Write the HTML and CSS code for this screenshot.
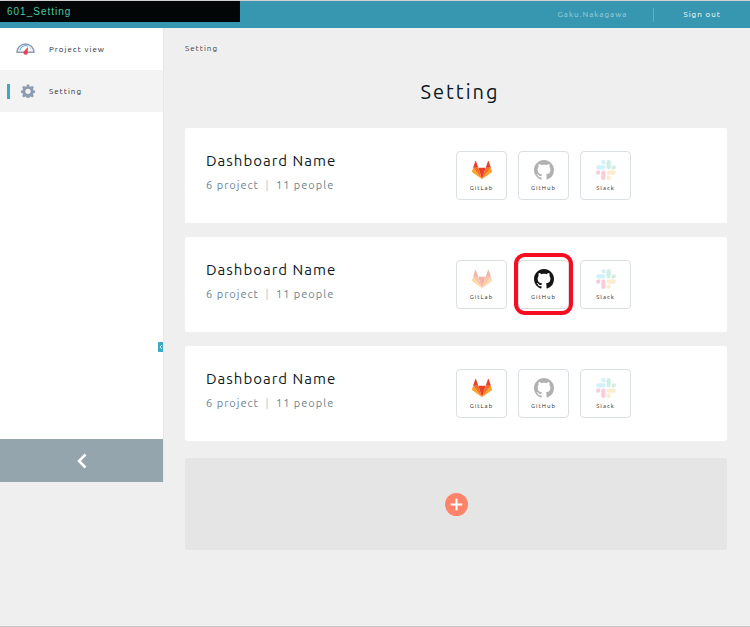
FILE: index.html
```html
<!DOCTYPE html>
<html lang="en">
<head>
<meta charset="utf-8">
<meta name="viewport" content="width=device-width, initial-scale=1">
<title>Setting</title>
<link rel="stylesheet" href="styles.css">
</head>
<body>
<svg class="sprite" aria-hidden="true">
  <symbol id="gitlab" viewBox="0 0 40 37">
    <path fill="#e24329" d="M20 37 27.4 14H12.6z"/>
    <path fill="#fc6d26" d="M20 37 12.6 14H2.2zM20 37 27.4 14h10.4z"/>
    <path fill="#fca326" d="M2.2 14 0 21c-.2.8 0 1.500.7 2L20 37zM37.800 14 40 21c.2.8 0 1.500-.7 2L20 37z"/>
    <path fill="#e24329" d="M2.200 14h10.400L8.100 1c-.3-.9-1.300-.9-1.600 0zM37.800 14H27.400L31.900 1c.3-.9 1.300-.9 1.600 0z"/>
  </symbol>
  <symbol id="github" viewBox="0 0 16 16">
    <path fill="currentColor" d="M8 0C3.580 0 0 3.580 0 8c0 3.540 2.290 6.530 5.470 7.590.4.070.55-.17.55-.38 0-.19-.01-.82-.01-1.490-2.010.37-2.530-.49-2.690-.94-.09-.23-.48-.94-.82-1.130-.28-.15-.68-.52-.01-.53.63-.01 1.080.58 1.230.82.72 1.210 1.870.87 2.330.66.070-.52.28-.87.51-1.070-1.780-.2-3.640-.89-3.640-3.950 0-.87.31-1.590.82-2.150-.08-.2-.36-1.020.08-2.120 0 0 .67-.21 2.200.82.64-.18 1.320-.27 2-.27s1.360.09 2 .27c1.530-1.040 2.200-.82 2.200-.82.44 1.100.16 1.920.08 2.120.51.56.82 1.270.82 2.150 0 3.070-1.870 3.750-3.650 3.950.29.25.54.73.54 1.480 0 1.070-.01 1.930-.01 2.200 0 .21.15.46.55.38A8.010 8.010 0 0 0 16 8c0-4.420-3.580-8-8-8z"/>
  </symbol>
  <symbol id="slack" viewBox="0 0 24 24">
    <path fill="#e01e5a" d="M5.042 15.165a2.528 2.528 0 0 1-2.520 2.523A2.528 2.528 0 0 1 0 15.165a2.527 2.527 0 0 1 2.522-2.520h2.520zM6.313 15.165a2.527 2.527 0 0 1 2.521-2.520 2.527 2.527 0 0 1 2.521 2.520v6.313A2.528 2.528 0 0 1 8.834 24a2.528 2.528 0 0 1-2.521-2.522z"/>
    <path fill="#36c5f0" d="M8.834 5.042a2.528 2.528 0 0 1-2.521-2.520A2.528 2.528 0 0 1 8.834 0a2.528 2.528 0 0 1 2.521 2.522v2.520zM8.834 6.313a2.528 2.528 0 0 1 2.521 2.521 2.528 2.528 0 0 1-2.521 2.521H2.522A2.528 2.528 0 0 1 0 8.834a2.528 2.528 0 0 1 2.522-2.521z"/>
    <path fill="#2eb67d" d="M18.956 8.834a2.528 2.528 0 0 1 2.522-2.521A2.528 2.528 0 0 1 24 8.834a2.528 2.528 0 0 1-2.522 2.521h-2.522zM17.688 8.834a2.528 2.528 0 0 1-2.523 2.521 2.527 2.527 0 0 1-2.520-2.521V2.522A2.527 2.527 0 0 1 15.165 0a2.528 2.528 0 0 1 2.523 2.522z"/>
    <path fill="#ecb22e" d="M15.165 18.956a2.528 2.528 0 0 1 2.523 2.522A2.528 2.528 0 0 1 15.165 24a2.527 2.527 0 0 1-2.520-2.522v-2.522zM15.165 17.688a2.527 2.527 0 0 1-2.520-2.523 2.526 2.526 0 0 1 2.520-2.520h6.313A2.527 2.527 0 0 1 24 15.165a2.528 2.528 0 0 1-2.522 2.523z"/>
  </symbol>
</svg>

<header class="topbar">
  <div class="brand">601_Setting</div>
  <div class="account">
    <span class="user">Gaku.Nakagawa</span>
    <a class="signout" href="#">Sign out</a>
  </div>
</header>

<div class="layout">
  <aside class="sidebar">
    <nav>
      <a class="nav-item" href="#">
        <svg class="nav-icon" viewBox="0 0 20 14" fill="none" aria-hidden="true">
          <path d="M1 10.500a9 8.800 0 0 1 18 0z" fill="#fff" stroke="#8a9ab0" stroke-width="1.500" stroke-linejoin="round"/>
          <path d="M4 8.500a6.300 6.300 0 0 1 9-4.500" stroke="#6aaef0" stroke-width="1.200"/>
          <path d="M14.500 5 16 7.800" stroke="#b8cbe2"/>
          <path d="M12.600 4.800 12.400 11a2.300 2.300 0 1 1-4.200-1.500z" fill="#e9415c"/>
        </svg>
        Project view
      </a>
      <a class="nav-item active" href="#">
        <svg class="nav-icon gear" viewBox="0 0 24 24" aria-hidden="true">
          <path fill="#8c9db2" fill-rule="evenodd" d="M10 1h4l.7 3.100 1.900.8 2.700-1.700 2.800 2.800-1.700 2.700.8 1.900 3.100.7v3.900l-3.100.7-.8 1.900 1.700 2.700-2.800 2.800-2.700-1.700-1.900.8-.7 3.100h-4l-.7-3.100-1.900-.8-2.700 1.700-2.800-2.800 1.700-2.700-.8-1.900-3.100-.7v-3.900l3.100-.7.8-1.900L1.900 6l2.800-2.800 2.700 1.700 1.900-.8zM12 8a4.500 4.500 0 1 0 0 9 4.500 4.500 0 0 0 0-9z"/>
        </svg>
        Setting
      </a>
    </nav>
    <button class="handle" type="button" aria-label="Resize sidebar">
      <svg viewBox="0 0 5 10" fill="none" aria-hidden="true"><path d="M4 3 2 5l2 2" stroke="#d3f1fa"/></svg>
    </button>
    <button class="collapse" type="button" aria-label="Collapse sidebar">
      <svg viewBox="0 0 10 16" fill="none" aria-hidden="true"><path d="M8.500 1.500 2 8l6.500 6.500" stroke="#fff" stroke-width="2.500"/></svg>
    </button>
  </aside>

  <main class="content">
    <div class="crumb">Setting</div>
    <h1>Setting</h1>
    <div class="cards">
      <section class="card">
        <div class="info">
          <h2>Dashboard Name</h2>
          <p>6 project <span class="bar">|</span> 11 people</p>
        </div>
        <div class="services">
          <button class="service" type="button"><svg class="logo"><use href="#gitlab"/></svg>GitLab</button>
          <button class="service" type="button"><svg class="logo dim"><use href="#github"/></svg>GitHub</button>
          <button class="service" type="button"><svg class="logo faint"><use href="#slack"/></svg>Slack</button>
        </div>
      </section>
      <section class="card">
        <div class="info">
          <h2>Dashboard Name</h2>
          <p>6 project <span class="bar">|</span> 11 people</p>
        </div>
        <div class="services">
          <button class="service" type="button"><svg class="logo pale"><use href="#gitlab"/></svg>GitLab</button>
          <button class="service selected" type="button"><svg class="logo"><use href="#github"/></svg>GitHub</button>
          <button class="service" type="button"><svg class="logo faint"><use href="#slack"/></svg>Slack</button>
        </div>
      </section>
      <section class="card">
        <div class="info">
          <h2>Dashboard Name</h2>
          <p>6 project <span class="bar">|</span> 11 people</p>
        </div>
        <div class="services">
          <button class="service" type="button"><svg class="logo"><use href="#gitlab"/></svg>GitLab</button>
          <button class="service" type="button"><svg class="logo dim"><use href="#github"/></svg>GitHub</button>
          <button class="service" type="button"><svg class="logo faint"><use href="#slack"/></svg>Slack</button>
        </div>
      </section>
    </div>
    <button class="add" type="button" aria-label="Add dashboard">
      <svg viewBox="0 0 24 24" aria-hidden="true"><circle cx="12" cy="12" r="12" fill="#ff836a"/><path d="M12 6v12M6 12h12" stroke="#fff" stroke-width="2.200"/></svg>
    </button>
  </main>
</div>
</body>
</html>
```
FILE: styles.css
```css
* {
  box-sizing: border-box;
}

body {
  margin: 0;
  min-height: 100vh;
  display: flex;
  flex-direction: column;
  background: #efefef;
  border-top: 1px solid #d0d0d0;
  border-bottom: 1px solid #c8c8c8;
  color: #0c181f;
  font-family: Ubuntu, "Noto Sans", sans-serif;
  font-size: 8px;
  letter-spacing: 1px;
}

a {
  color: inherit;
  text-decoration: none;
}

button {
  border: 0;
  padding: 0;
  font: inherit;
  letter-spacing: inherit;
  color: inherit;
  cursor: pointer;
}

.sprite {
  position: absolute;
  width: 0;
  height: 0;
}

.topbar {
  display: flex;
  justify-content: space-between;
  align-items: flex-start;
  height: 27px;
  background: #3797b1;
}

.brand {
  width: 32%;
  height: 21px;
  padding-left: 7px;
  background: #020607;
  color: #4cc7a4;
  font-family: "Liberation Sans", Arial, sans-serif;
  font-size: 10px;
  line-height: 21px;
}

.account {
  display: flex;
  align-items: center;
  height: 27px;
  padding-right: 29px;
}

.user {
  padding-right: 26px;
  color: #9dd0dd;
}

.signout {
  padding-left: 29px;
  border-left: 1px solid #62afc3;
  color: #fff;
  line-height: 14px;
}

.layout {
  display: flex;
  align-items: flex-start;
  flex: 1;
}

.sidebar {
  position: relative;
  display: flex;
  flex-direction: column;
  flex: none;
  width: 164px;
  min-height: 454px;
  background: #fff;
  border-right: 1px solid #e8e8e8;
}

.nav-item {
  display: grid;
  grid-template-columns: 19px 1fr;
  column-gap: 14px;
  align-items: center;
  height: 42px;
  padding-left: 16px;
  color: #1f2b33;
}

.nav-item.active {
  position: relative;
  background: #f3f3f3;
}

.nav-item.active::before {
  content: "";
  position: absolute;
  left: 7px;
  top: 14px;
  width: 3px;
  height: 15px;
  background: #3da9c7;
}

.nav-icon {
  width: 19px;
  height: 14px;
}

.nav-icon.gear {
  width: 14px;
  justify-self: end;
}

.handle {
  position: absolute;
  right: 0;
  top: 314px;
  width: 5px;
  height: 10px;
  border-radius: 1px 0 0 1px;
  background: #3da9c7;
}

.handle svg {
  display: block;
  width: 5px;
  height: 10px;
}

.collapse {
  display: flex;
  align-items: center;
  justify-content: center;
  height: 43px;
  margin-top: auto;
  background: #95a5ad;
}

.collapse svg {
  width: 10px;
  height: 16px;
}

.content {
  flex: 1;
  padding: 15px 23px 32px 21px;
}

.crumb {
  color: #3a3a3a;
  line-height: 12px;
}

h1 {
  margin: 21px 0 20px;
  padding-left: 8px;
  text-align: center;
  font-size: 20px;
  line-height: 32px;
  font-weight: 400;
  letter-spacing: 2px;
}

.cards {
  display: grid;
  gap: 14px;
}

.card {
  display: flex;
  justify-content: space-between;
  align-items: center;
  height: 95px;
  padding: 0 96px 0 21px;
  border-radius: 2px;
  background: #fff;
}

.info {
  padding-bottom: 5px;
}

h2 {
  margin: 0;
  font-size: 15px;
  line-height: 24px;
  font-weight: 400;
}

.info p {
  margin: 0;
  color: #6d838e;
  font-size: 11px;
  line-height: 24px;
}

.bar {
  padding: 0 3px;
  color: #b6c0c5;
}

.services {
  display: flex;
  gap: 11px;
}

.service {
  position: relative;
  display: flex;
  flex-direction: column;
  align-items: center;
  gap: 4px;
  width: 51px;
  height: 49px;
  padding-top: 8px;
  border: 1px solid #d9dfe2;
  border-radius: 4px;
  background: #fff;
  color: #1f292e;
  font-size: 6px;
  line-height: 8px;
}

.service.selected::after {
  content: "";
  position: absolute;
  inset: -8px -5px -7px;
  border: 4px solid #f60d20;
  border-radius: 11px;
}

.logo {
  width: 20px;
  height: 20px;
  color: #151515;
}

.dim {
  color: #b1b1b1;
}

.pale {
  opacity: 0.4;
}

.faint {
  opacity: 0.22;
}

.add {
  display: flex;
  align-items: center;
  justify-content: center;
  width: 100%;
  height: 92px;
  margin-top: 17px;
  border-radius: 2px;
  background: #e5e5e5;
}

.add svg {
  width: 23px;
  height: 23px;
}
```
